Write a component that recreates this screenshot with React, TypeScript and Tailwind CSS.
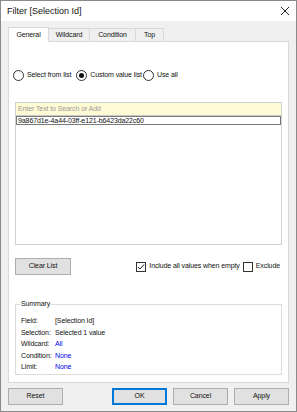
import React from "react";

const font = { fontFamily: '"Liberation Sans", Arial, sans-serif' };

function Radio({ checked }: { checked?: boolean }) {
  return (
    <span className="w-[11px] h-[11px] rounded-full border border-[#333] bg-white flex items-center justify-center shrink-0">
      {checked && <span className="w-[5px] h-[5px] rounded-full bg-[#111]" />}
    </span>
  );
}

function Check({ checked }: { checked?: boolean }) {
  return (
    <span className="w-[10px] h-[10px] border border-[#333] bg-white flex items-center justify-center shrink-0">
      {checked && (
        <svg width="8" height="8" viewBox="0 0 8 8">
          <path d="M1 4 L3 6 L7 1.5" fill="none" stroke="#222" strokeWidth="1" />
        </svg>
      )}
    </span>
  );
}

function Btn({ label, focused, w = "w-[55px]" }: { label: string; focused?: boolean; w?: string }) {
  return (
    <div
      className={`${w} h-[17px] flex items-center justify-center bg-[#e1e1e1] text-[7px] tracking-[-0.1px] text-[#111] ${
        focused ? "border-2 border-[#0078d7]" : "border border-[#adadad]"
      }`}
    >
      {label}
    </div>
  );
}

export default function App() {
  return (
    <div style={font} className="w-[297px] h-[412px] flex flex-col bg-[#f0f0f0] border border-[#8a8a8a] text-[#111]">
      <div className="h-[20px] bg-white flex items-center justify-between pl-[6px] pr-[6px] shrink-0">
        <span className="text-[9px] leading-none">Filter [Selection Id]</span>
        <svg width="10" height="10" viewBox="0 0 10 10">
          <path d="M1 1 L9 9 M9 1 L1 9" stroke="#222" strokeWidth="1" />
        </svg>
      </div>
      <div className="flex-1 flex flex-col px-[7px]">
        <div className="h-[20px] flex items-end text-[7px] tracking-[-0.1px]">
          <div className="w-[41px] h-[15px] bg-white border border-[#d9d9d9] border-b-0 flex items-center justify-center -mb-[1px] relative z-10">
            General
          </div>
          <div className="w-[41px] h-[13px] border border-[#d9d9d9] border-b-0 border-l-0 flex items-center justify-center">
            Wildcard
          </div>
          <div className="w-[46px] h-[13px] border border-[#d9d9d9] border-b-0 border-l-0 flex items-center justify-center">
            Condition
          </div>
          <div className="w-[28px] h-[13px] border border-[#d9d9d9] border-b-0 border-l-0 flex items-center justify-center">
            Top
          </div>
        </div>
        <div className="h-[342px] bg-white border border-[#d9d9d9] flex flex-col px-[6px] text-[7px] tracking-[-0.1px]">
          <div className="mt-[27px] h-[12px] flex items-center -ml-[2px]">
            <Radio />
            <span className="ml-[3px]">Select from list</span>
            <span className="ml-[5px]"><Radio checked /></span>
            <span className="ml-[3px]">Custom value list</span>
            <span className="ml-[1px]"><Radio /></span>
            <span className="ml-[3px]">Use all</span>
          </div>
          <div className="mt-[21px] h-[143px] border border-[#d0d0d0] flex flex-col">
            <div className="h-[13px] bg-[#fffbd4] border-b border-[#c8c8c8] text-[#9a9a9a] flex items-center pl-[2px]">
              Enter Text to Search or Add
            </div>
            <div className="h-[9px] border border-[#7a7a7a] leading-none flex items-center pl-[1px] bg-white">
              9a867d1e-4a44-03ff-e121-b6423da22c60
            </div>
          </div>
          <div className="mt-[13px] flex items-center justify-between">
            <Btn label="Clear List" w="w-[56px]" />
            <div className="flex items-center mr-[2px]">
              <Check checked />
              <span className="ml-[3px]">Include all values when empty</span>
              <span className="ml-[3px]"><Check /></span>
              <span className="ml-[3px]">Exclude</span>
            </div>
          </div>
          <div className="mt-[29px] h-[71px] border border-[#dcdcdc] relative">
            <span className="absolute -top-[5px] left-[4px] bg-white px-[1px] leading-none">Summary</span>
            <div className="mt-[10px] ml-[5px] grid grid-cols-[34px_1fr] text-[7px] leading-[11.5px]">
              <span>Field:</span><span>[Selection Id]</span>
              <span>Selection:</span><span>Selected 1 value</span>
              <span>Wildcard:</span><span className="text-[#0000ee]">All</span>
              <span>Condition:</span><span className="text-[#0000ee]">None</span>
              <span>Limit:</span><span className="text-[#0000ee]">None</span>
            </div>
          </div>
        </div>
        <div className="mt-[5px] flex items-center">
          <Btn label="Reset" />
          <div className="ml-auto flex gap-[6px]">
            <Btn label="OK" focused />
            <Btn label="Cancel" />
            <Btn label="Apply" />
          </div>
        </div>
      </div>
    </div>
  );
}
